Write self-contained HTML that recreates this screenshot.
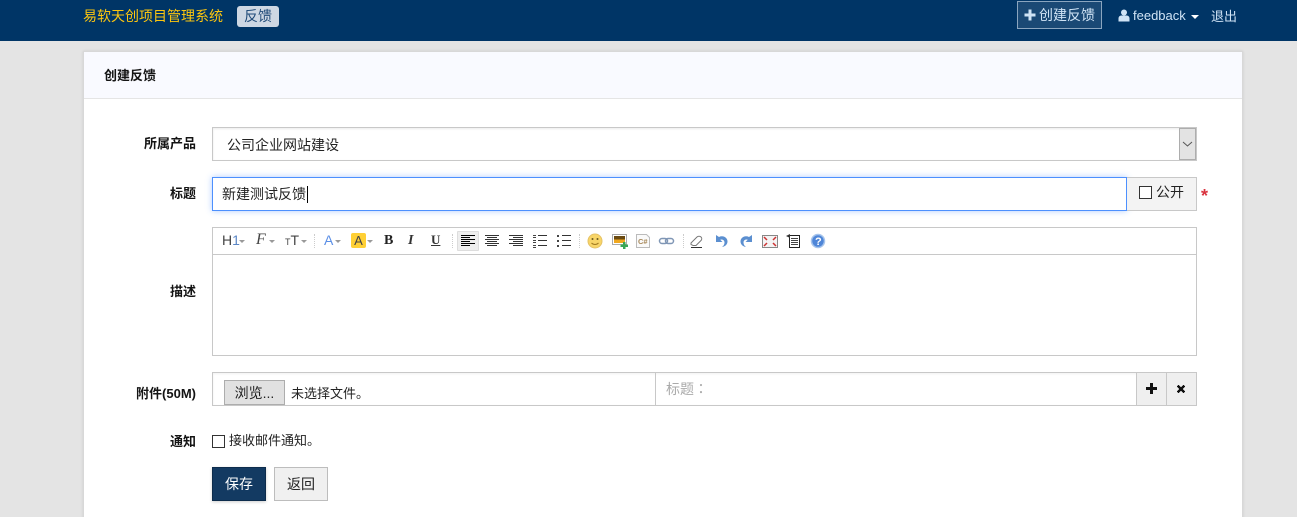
<!DOCTYPE html>
<html><head><meta charset="utf-8">
<style>
*{box-sizing:border-box}
html,body{margin:0;padding:0;width:1297px;height:517px;overflow:hidden;background:#e5e5e5}
#w{position:absolute;left:0;top:0;width:1297px;height:517px;overflow:hidden;background:#e4e4e4;font-family:"Liberation Sans","Noto Sans CJK SC",sans-serif;font-size:13px;color:#141414}
.a{position:absolute;white-space:nowrap}
.lb{position:absolute;right:1101px;font-weight:700;font-size:13px;line-height:20px;white-space:nowrap;color:#141414}
.sep{position:absolute;top:234px;height:14px;border-left:1px dotted #ccc}
.caret{position:absolute;width:0;height:0;border-left:3px solid transparent;border-right:3px solid transparent;border-top:3px solid #999}
.ln{position:absolute;height:1px}
</style></head><body><div id="w">
<div class="a" style="left:0;top:0;width:1297px;height:41px;background:#003566"></div>
<div class="a" style="left:83px;top:6px;font-size:14px;line-height:20px;color:#fdc60f">易软天创项目管理系统</div>
<div class="a" style="left:237px;top:6px;width:42px;height:21px;background:#cdd7e3;border-radius:3px;color:#1f4a78;font-size:14px;line-height:20px;text-align:center">反馈</div>
<div class="a" style="left:1017px;top:1px;width:85px;height:28px;border:1px solid #8aa5bf;background:#1a4975"></div>
<svg class="a" style="left:1024px;top:9px" width="12" height="12" viewBox="0 0 12 12"><path d="M4.500 0.500h3v4h4v3h-4v4h-3v-4h-4v-3h4z" fill="#cfe3f5"/></svg>
<div class="a" style="left:1039px;top:5px;font-size:14px;line-height:20px;color:#cfe3f5">创建反馈</div>
<svg class="a" style="left:1118px;top:9px" width="12" height="13" viewBox="0 0 12 13"><circle cx="6" cy="3.500" r="3" fill="#cfe3f5"/><path d="M0.500 12.500v-3c0-2 1.500-3 3-3h5c1.500 0 3 1 3 3v3z" fill="#cfe3f5"/></svg>
<div class="a" style="left:1133px;top:6px;font-size:13px;line-height:20px;color:#cfe3f5">feedback</div>
<div class="a" style="left:1191px;top:15px;width:0;height:0;border-left:4px solid transparent;border-right:4px solid transparent;border-top:4px solid #fff"></div>
<div class="a" style="left:1211px;top:7px;font-size:13px;line-height:20px;color:#cfe3f5">退出</div>

<div class="a" style="left:83px;top:51px;width:1160px;height:480px;background:#fff;border:1px solid #d8d8d8;box-shadow:0 0 3px rgba(0,0,0,.1)"></div>
<div class="a" style="left:84px;top:52px;width:1158px;height:47px;background:#f9faff;border-bottom:1px solid #e5e5e5"></div>
<div class="a" style="left:104px;top:66px;font-weight:700;font-size:13px;line-height:20px">创建反馈</div>

<div class="lb" style="top:134px">所属产品</div>
<div class="a" style="left:212px;top:127px;width:985px;height:34px;border:1px solid #c8c8c8;background:#fff;box-shadow:inset 0 1px 2px rgba(0,0,0,.08)"></div>
<div class="a" style="left:227px;top:135px;font-size:14px;line-height:20px;color:#222">公司企业网站建设</div>
<div class="a" style="left:1179px;top:128px;width:17px;height:32px;background:#e3e3e3;border:1px solid #adadad"></div>
<svg class="a" style="left:1182px;top:140px" width="11" height="8" viewBox="0 0 11 8"><path d="M1 2l4.500 4l4.500-4" fill="none" stroke="#555" stroke-width="1"/></svg>

<div class="lb" style="top:184px">标题</div>
<div class="a" style="left:212px;top:177px;width:915px;height:34px;border:1px solid #4d90fe;background:#fff;box-shadow:0 0 6px rgba(77,144,254,.45)"></div>
<div class="a" style="left:222px;top:184px;font-size:14px;line-height:20px;color:#222">新建测试反馈</div>
<div class="a" style="left:307px;top:186px;width:1px;height:17px;background:#000"></div>
<div class="a" style="left:1127px;top:177px;width:70px;height:34px;background:#f3f3f3;border:1px solid #c8c8c8;border-left:0"></div>
<div class="a" style="left:1139px;top:186px;width:13px;height:13px;border:1px solid #333;background:#fff"></div>
<div class="a" style="left:1156px;top:182px;font-size:14px;line-height:20px;color:#222">公开</div>
<div class="a" style="left:1201px;top:187px;font-size:18px;line-height:18px;color:#d9333f;font-weight:700">*</div>

<div class="lb" style="top:282px">描述</div>
<div class="a" style="left:212px;top:227px;width:985px;height:129px;border:1px solid #c8c8c8;background:#fff"></div>
<div class="ln" style="left:213px;top:254px;width:983px;background:#c8c8c8"></div>

<div class="a" style="left:222px;top:232px;font-size:14px;line-height:17px;color:#444">H<span style="color:#5b86c5">1</span></div>
<div class="caret" style="left:239px;top:240px"></div>
<div class="a" style="left:256px;top:231px;font:italic 16px/18px 'Liberation Serif',serif;color:#444">F</div>
<div class="caret" style="left:269px;top:240px"></div>
<div class="a" style="left:285px;top:232px;font-size:14px;line-height:17px;color:#444"><span style="font-size:9px">T</span>T</div>
<div class="caret" style="left:301px;top:240px"></div>
<div class="sep" style="left:314px"></div>
<div class="a" style="left:324px;top:232px;font-size:14px;line-height:17px;color:#5b8fe6">A</div>
<div class="caret" style="left:335px;top:240px"></div>
<div class="a" style="left:351px;top:233px;width:15px;height:15px;background:#ffd035;border-radius:2px;font-size:13px;line-height:15px;text-align:center;color:#444">A</div>
<div class="caret" style="left:367px;top:240px"></div>
<div class="a" style="left:384px;top:232px;font:700 14px/17px 'Liberation Serif',serif;color:#222">B</div>
<div class="a" style="left:408px;top:232px;font:italic 700 14px/17px 'Liberation Serif',serif;color:#333">I</div>
<div class="a" style="left:431px;top:232px;font:700 13px/16px 'Liberation Serif',serif;color:#333;text-decoration:underline">U</div>
<div class="sep" style="left:452px"></div>
<div class="a" style="left:457px;top:231px;width:22px;height:20px;background:#eee;border:1px solid #ddd;border-radius:1px"></div>
<svg class="a" style="left:461px;top:235px" width="112" height="13" viewBox="0 0 112 13" shape-rendering="crispEdges" fill="none" stroke-width="1">
<path stroke="#000" d="M0 .5h14M0 2.500h9M0 4.500h14M0 6.500h9M0 8.500h14M0 10.500h9"/>
<path stroke="#333" d="M24 .5h14M26 2.500h10M24 4.500h14M26 6.500h10M24 8.500h14M26 10.500h10"/>
<path stroke="#333" d="M48 .5h14M52 2.500h10M48 4.500h14M52 6.500h10M48 8.500h14M52 10.500h10"/>
<path stroke="#333" d="M77 .5h9M77 5.500h9M77 10.500h9"/>
<path stroke="#333" d="M101 .5h9M101 5.500h9M101 10.500h9"/>
<path stroke="#444" d="M72 .5h3M72 2.500h3M72 5.500h3M72 7.500h3M72 10.500h3M72 12.500h3"/>
<path stroke="#444" stroke-width="2" d="M97 0v2M97 5v2M97 10v2"/>
</svg>
<div class="sep" style="left:579px"></div>
<svg class="a" style="left:587px;top:233px" width="240" height="16" viewBox="0 0 240 16">
<circle cx="8" cy="8" r="7" fill="#f8d568" stroke="#e5c265"/><circle cx="5.500" cy="6" r="1" fill="#6b5a20"/><circle cx="10.500" cy="6" r="1" fill="#6b5a20"/><path d="M4.500 10c2 2 5 2 7 0" fill="none" stroke="#a27a20"/>
<rect x="25.500" y="1.500" width="14" height="10" fill="#fff" stroke="#aaa"/><rect x="27" y="3" width="11" height="3.500" fill="#6a4a10"/><rect x="27" y="6.500" width="11" height="3.500" fill="#f0a820"/>
<path d="M36 9h2.500v2.500H41V14h-2.500v2H36v-2h-2.500v-2.500H36z" fill="#3aa655"/>
<path d="M49.500 1.500h10l3 3v10h-13z" fill="#fafafa" stroke="#bbb"/><text x="51" y="11" font-family="Liberation Sans" font-size="7.500" font-weight="700" fill="#a8895a">C#</text>
<rect x="72.500" y="5.500" width="8" height="5" rx="2.500" fill="none" stroke="#7f96b5" stroke-width="1.500"/><rect x="78.500" y="5.500" width="8" height="5" rx="2.500" fill="none" stroke="#7f96b5" stroke-width="1.500"/>
<path d="M104 10l6-6c1-1 3-1 4 0s1 2.500 0 3.500l-5 5h-3l-2-1z" fill="#fff" stroke="#777"/><path d="M104 14.500h11" stroke="#333"/>
<path d="M129 2v7h6.500l-2.300-2.300c2-.8 4.300.3 4.300 2.800 0 2-1 3.500-2.500 4.500 3.500-.5 5.500-3 5.500-5.500 0-4-4.500-6.500-8.500-4.500z" fill="#5b8fd0"/>
<path d="M165 2v7h-6.500l2.300-2.300c-2-.8-4.300.3-4.300 2.800 0 2 1 3.500 2.500 4.500-3.500-.5-5.500-3-5.500-5.500 0-4 4.500-6.500 8.500-4.500z" fill="#5b8fd0"/>
<rect x="175.500" y="2.500" width="15" height="12" fill="#f4f4f4" stroke="#888"/><path d="M177 4l3 3M189 4l-3 3M177 13l3-3M189 13l-3-3" stroke="#c33" stroke-width="1.500"/>
<path d="M202.500 2.500h10v12h-10z" fill="#fff" stroke="#222"/><path d="M199 3l4-2v4z" fill="#333"/><path d="M204 5.500h7M204 7.500h7M204 9.500h7M204 11.500h7" stroke="#444"/>
<circle cx="231" cy="8" r="6.500" fill="#4f86d8" stroke="#a6c4ec" stroke-width="1.500"/><text x="228" y="12" font-family="Liberation Sans" font-size="11" font-weight="700" fill="#fff">?</text>
</svg>
<div class="sep" style="left:683px"></div>

<div class="lb" style="top:384px">附件(50M)</div>
<div class="a" style="left:212px;top:372px;width:985px;height:34px;border:1px solid #c8c8c8;background:#fff;box-shadow:inset 0 1px 2px rgba(0,0,0,.06)"></div>
<div class="a" style="left:224px;top:380px;width:61px;height:25px;background:#e1e1e1;border:1px solid #adadad;font-size:14px;line-height:25px;text-align:center;color:#222">浏览...</div>
<div class="a" style="left:291px;top:384px;font-size:13px;line-height:20px;color:#222">未选择文件。</div>
<div class="a" style="left:655px;top:373px;width:1px;height:32px;background:#c8c8c8"></div>
<div class="a" style="left:666px;top:379px;font-size:14px;line-height:20px;color:#aaa">标题<span style="font-family:'Noto Sans CJK TC',sans-serif">：</span></div>
<div class="a" style="left:1136px;top:373px;width:60px;height:32px;background:#efefef"></div>
<div class="a" style="left:1136px;top:373px;width:1px;height:32px;background:#c8c8c8"></div>
<div class="a" style="left:1166px;top:373px;width:1px;height:32px;background:#c8c8c8"></div>
<svg class="a" style="left:1146px;top:383px" width="11" height="11" viewBox="0 0 11 11"><path d="M4 0h3v4h4v3H7v4H4V7H0V4h4z" fill="#111"/></svg>
<svg class="a" style="left:1176px;top:384px" width="10" height="10" viewBox="0 0 10 10"><path d="M1 2.500L2.500 1 5 3.500 7.500 1 9 2.500 6.500 5 9 7.500 7.500 9 5 6.500 2.500 9 1 7.500 3.500 5z" fill="#111" stroke="#111" stroke-width=".5"/></svg>

<div class="lb" style="top:432px">通知</div>
<div class="a" style="left:212px;top:435px;width:13px;height:13px;border:1px solid #333;background:#fff"></div>
<div class="a" style="left:229px;top:431px;font-size:13px;line-height:20px;color:#222">接收邮件通知。</div>

<div class="a" style="left:212px;top:467px;width:54px;height:34px;background:#133a62;border:1px solid #0d2c4c;color:#fff;font-size:14px;line-height:33px;text-align:center;box-shadow:0 1px 3px rgba(0,0,0,.2)">保存</div>
<div class="a" style="left:274px;top:467px;width:54px;height:34px;background:#f0f0f0;border:1px solid #bdbdbd;color:#222;font-size:14px;line-height:33px;text-align:center">返回</div>
</div></body></html>
